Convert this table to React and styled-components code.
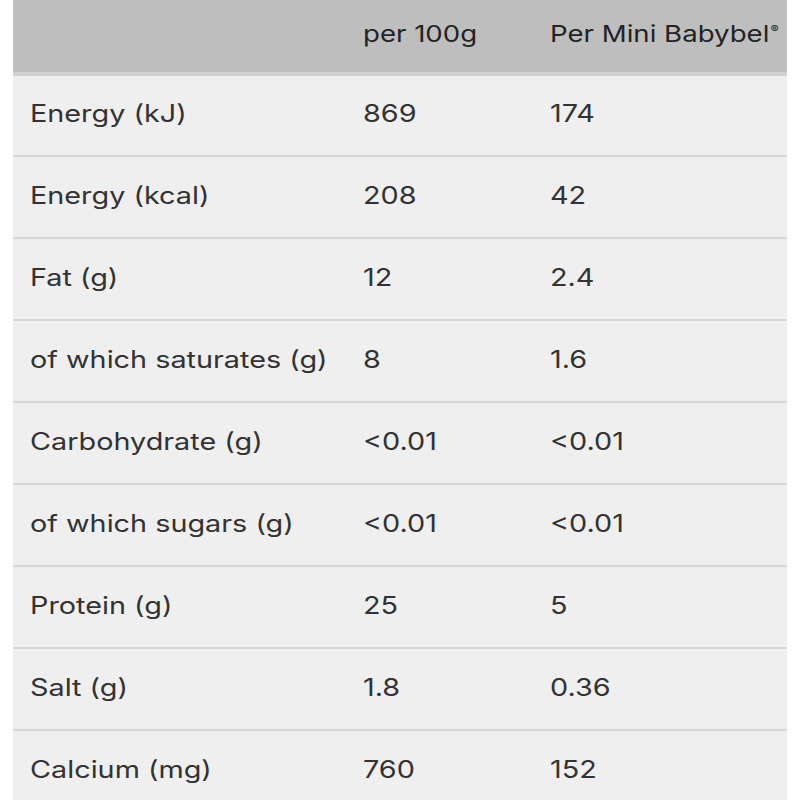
import React from "react";
import styled, { createGlobalStyle } from "styled-components";

const GlobalStyle = createGlobalStyle`
  html, body {
    margin: 0;
    padding: 0;
    background: #ffffff;
  }
  body {
    font-family: Inter, "Noto Sans", "Liberation Sans", sans-serif;
    -webkit-font-smoothing: antialiased;
  }
`;

const ROWS = [
  [ "Energy (kJ)", "869", "174" ],
  [ "Energy (kcal)", "208", "42" ],
  [ "Fat (g)", "12", "2.4" ],
  [ "of which saturates (g)", "8", "1.6" ],
  [ "Carbohydrate (g)", "<0.01", "<0.01" ],
  [ "of which sugars (g)", "<0.01", "<0.01" ],
  [ "Protein (g)", "25", "5" ],
  [ "Salt (g)", "1.8", "0.36" ],
  [ "Calcium (mg)", "760", "152" ],
];

// column widths + left padding, border-box
const COLS = [
  { w: 335, pad: 17 },
  { w: 187, pad: 15 },
  { w: 252, pad: 15 },
];

const Page = styled.div`
  padding: 0 13px;
`;

const Table = styled.table`
  width: 774px;
  border-collapse: collapse;
  table-layout: fixed;
  background: #efefef;
`;

const HeadRow = styled.tr`
  background: #bebebe;
  border-bottom: 4px solid #d0d0d0;
`;

const HeadCell = styled.th`
  box-sizing: border-box;
  width: ${ ( p ) => p.$w }px;
  height: 74px;
  padding: 0 0 4px ${ ( p ) => p.$pad }px;
  text-align: left;
  vertical-align: middle;
  font-weight: 400;
  font-size: 23px;
  color: #232323;
  white-space: nowrap;
`;

const Row = styled.tr`
  border-bottom: 2px solid #d6d6d6;
`;

const Cell = styled.td`
  box-sizing: border-box;
  height: 82px;
  padding: 0 0 4px ${ ( p ) => p.$pad }px;
  vertical-align: middle;
  font-size: 24px;
  color: #333333;
  white-space: nowrap;
`;

// the source type is set wide; stretch the glyphs to match
const Text = styled.span`
  display: inline-block;
  transform: scaleX(1.2);
  transform-origin: left center;
`;

const Reg = styled.sup`
  font-size: 0.45em;
  font-weight: 700;
  vertical-align: 0.9em;
  margin-left: 1px;
`;

export default function App() {
  return (
    <Page>
      <GlobalStyle/>
      <Table>
        <thead>
          <HeadRow>
            <HeadCell $w={ COLS[0].w } $pad={ COLS[0].pad }></HeadCell>
            <HeadCell $w={ COLS[1].w } $pad={ COLS[1].pad }><Text>per 100g</Text></HeadCell>
            <HeadCell $w={ COLS[2].w } $pad={ COLS[2].pad }>
              <Text>Per Mini Babybel<Reg>®</Reg></Text>
            </HeadCell>
          </HeadRow>
        </thead>
        <tbody>
          { ROWS.map( ( r ) => (
            <Row key={ r[0] }>
              { r.map( ( v, i ) => (
                <Cell key={ i } $pad={ COLS[i].pad }><Text>{ v }</Text></Cell>
              ) ) }
            </Row>
          ) ) }
        </tbody>
      </Table>
    </Page>
  );
}
